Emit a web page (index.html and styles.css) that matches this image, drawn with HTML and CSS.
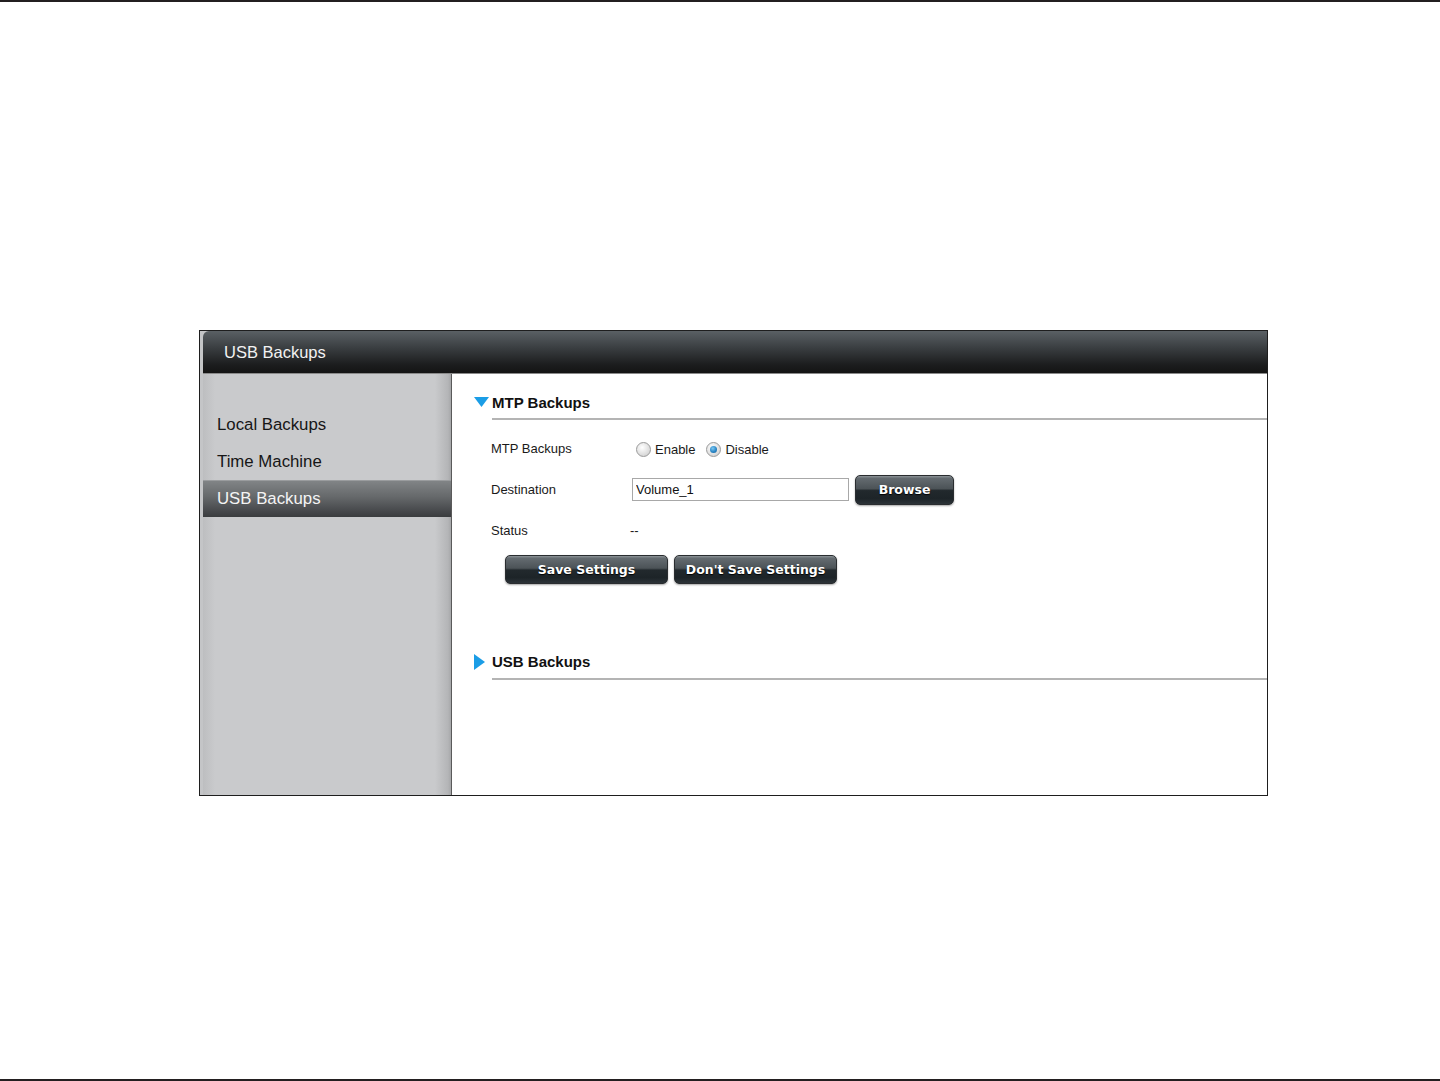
FILE: index.html
```html
<!DOCTYPE html>
<html lang="en">
<head>
    <meta charset="UTF-8">
    <title>USB Backups</title>
    <link rel="stylesheet" href="styles.css">
</head>
<body>
    <div class="page">
        <div class="frame">
            <div class="inner">
                <div class="title-bar">USB Backups</div>
                <div class="frame-body">
                    <ul class="side-nav">
                        <li>Local Backups</li>
                        <li>Time Machine</li>
                        <li class="active">USB Backups</li>
                    </ul>
                    <div class="content">
                        <div class="section-head">
                            <svg class="arrow-down" width="15" height="10" viewBox="0 0 15 10"><polygon points="0,0 15,0 7.5,10" fill="#1b9de6"/></svg>
                            <h3>MTP Backups</h3>
                        </div>
                        <div class="form-body">
                            <div class="form-row">
                                <span class="label">MTP Backups</span>
                                <div class="value">
                                    <label class="radio"><span class="dot"></span>Enable</label>
                                    <label class="radio"><span class="dot checked"></span>Disable</label>
                                </div>
                            </div>
                            <div class="form-row">
                                <span class="label">Destination</span>
                                <div class="value">
                                    <input type="text" class="text-input" value="Volume_1">
                                    <button class="btn btn-browse">Browse</button>
                                </div>
                            </div>
                            <div class="form-row">
                                <span class="label">Status</span>
                                <div class="value status">--</div>
                            </div>
                            <div class="actions">
                                <button class="btn btn-wide">Save Settings</button>
                                <button class="btn btn-wide">Don't Save Settings</button>
                            </div>
                        </div>
                        <div class="section-head second">
                            <svg class="arrow-right" width="11" height="16" viewBox="0 0 11 16"><polygon points="0,0 11,8 0,16" fill="#1b9de6"/></svg>
                            <h3>USB Backups</h3>
                        </div>
                    </div>
                </div>
            </div>
        </div>
    </div>
</body>
</html>
```

FILE: styles.css
```css
body {
    margin: 0;
    background: #fff;
    font-family: "Liberation Sans", Arial, sans-serif;
}
.page {
    height: 1081px;
    box-sizing: border-box;
    border-top: 2px solid #231f20;
    border-bottom: 2px solid #231f20;
    padding-top: 328px;
}
.frame {
    margin-left: 199px;
    width: 1069px;
    height: 466px;
    box-sizing: border-box;
    border: 1px solid #1e1e1e;
    background: #c4c5c7;
    padding-left: 3px;
}
.inner {
    display: flex;
    flex-direction: column;
    height: 100%;
}
.title-bar {
    height: 42px;
    line-height: 42px;
    padding-left: 21px;
    font-size: 16.5px;
    color: #f2f2f2;
    border-top-left-radius: 6px;
    background: linear-gradient(to bottom, #5a6064 0%, #3a3e41 40%, #1c1d1e 80%, #141414 100%);
    border-bottom: 1px solid #8a8a8a;
}
.frame-body {
    flex: 1;
    display: flex;
    background: #fff;
}
.side-nav {
    list-style: none;
    margin: 0;
    padding: 32px 0 0;
    width: 248px;
    background: linear-gradient(to right, #bdbec0 0, #c9cacc 12px, #c9cacc calc(100% - 16px), #b4b5b7 calc(100% - 3px), #a6a7a9 100%);
    border-right: 1px solid #5a5a5a;
}
.side-nav li {
    height: 37px;
    line-height: 37px;
    padding-left: 14px;
    font-size: 16.8px;
    color: #161616;
}
.side-nav li.active {
    box-sizing: border-box;
    border-top: 1px solid #9a9c9e;
    line-height: 36px;
    color: #f4f4f4;
    background: linear-gradient(to bottom, #818486 0%, #65686a 45%, #45474a 85%, #3a3c3e 100%);
}
.content {
    flex: 1;
    padding-left: 22px;
}
.section-head {
    display: flex;
    align-items: flex-start;
    padding-top: 20px;
}
.section-head.second {
    padding-top: 69px;
}
.arrow-down {
    margin-top: 3px;
    margin-right: 3px;
}
.arrow-right {
    margin-top: 1px;
    margin-right: 7px;
}
.section-head h3 {
    flex: 1;
    margin: 0;
    font-size: 15px;
    line-height: 18px;
    color: #111;
    padding-bottom: 6px;
    border-bottom: 2px solid #b4b4b4;
}
.section-head.second h3 {
    padding-bottom: 7px;
}
.form-body {
    padding: 8px 0 0 17px;
}
.form-row {
    display: flex;
    align-items: center;
    height: 41px;
}
.label {
    width: 141px;
    font-size: 13px;
    color: #1a1a1a;
}
.value {
    display: flex;
    align-items: center;
    font-size: 13px;
    color: #1a1a1a;
}
.status {
    margin-left: -2px;
}
.radio {
    display: flex;
    align-items: center;
    margin-left: 4px;
    margin-right: 7px;
    padding-top: 2px;
}
.dot {
    width: 13px;
    height: 13px;
    border-radius: 50%;
    border: 1px solid #9a9a9a;
    background: radial-gradient(circle at 40% 35%, #ffffff 0, #e4e4e4 50%, #c8c8c8 100%);
    margin-right: 4px;
    position: relative;
}
.dot.checked::after {
    content: "";
    position: absolute;
    left: 3px;
    top: 3px;
    width: 7px;
    height: 7px;
    border-radius: 50%;
    background: radial-gradient(circle at 40% 35%, #7cc8f2 0, #2a86c6 55%, #155e96 100%);
}
.text-input {
    width: 217px;
    height: 23px;
    box-sizing: border-box;
    border: 1px solid #a8a8a8;
    padding: 0 3px;
    font-family: "Liberation Sans", Arial, sans-serif;
    font-size: 13px;
    color: #111;
    outline: none;
}
.btn {
    box-sizing: border-box;
    border: 1px solid #2a2d30;
    border-radius: 5px;
    color: #fff;
    font-family: "DejaVu Sans", Verdana, sans-serif;
    font-weight: bold;
    font-size: 12.5px;
    text-shadow: 0 1px 1px #000;
    background: linear-gradient(to bottom, #8e9599 0, #646b70 8%, #4c5357 45%, #22292d 52%, #1d2428 80%, #2c3338 100%);
    box-shadow: 0 1px 2px rgba(0,0,0,0.35);
    cursor: pointer;
}
.btn-browse {
    margin-left: 6px;
    width: 99px;
    height: 30px;
}
.actions {
    display: flex;
    gap: 6px;
    padding-left: 14px;
    margin-top: 4px;
}
.btn-wide {
    width: 163px;
    height: 29px;
}
```
